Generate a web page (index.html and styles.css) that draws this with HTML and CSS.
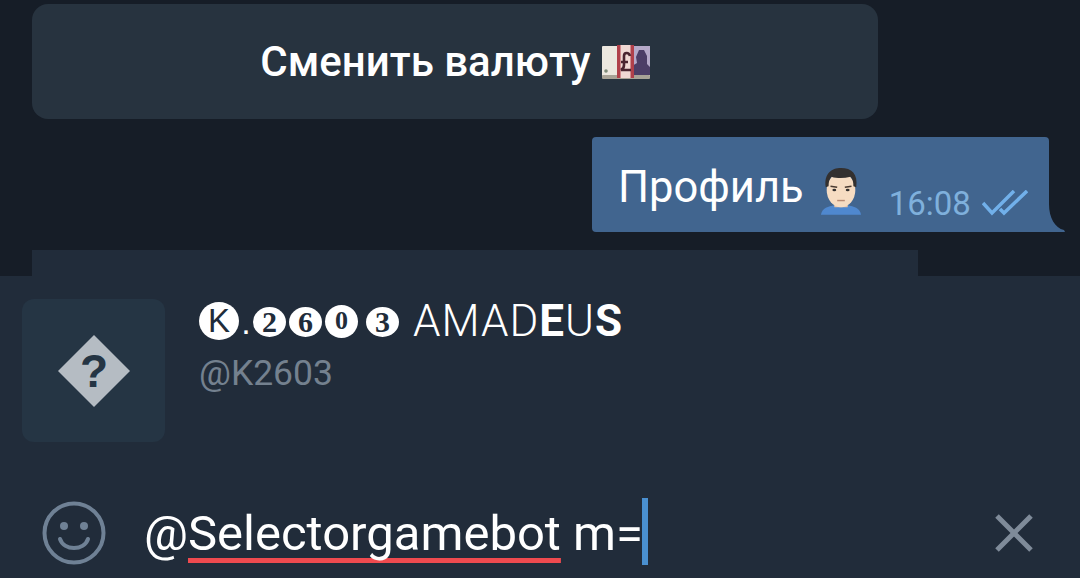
FILE: index.html
```html
<!DOCTYPE html>
<html lang="en">
<head>
    <meta charset="UTF-8">
    <meta name="viewport" content="width=device-width, initial-scale=1.0">
    <title>Selectorgamebot</title>
    <link rel="stylesheet" href="styles.css">
</head>
<body>
    <div class="chat">
        <div class="bot-button">
            <span>Сменить валюту</span>
            <svg class="emoji-money" viewBox="0 0 48 34">
                <rect x="0" y="1" width="48" height="31" rx="1" fill="#ece7df"/>
                <rect x="0" y="30" width="48" height="4" rx="1" fill="#a8a296"/>
                <rect x="30" y="1" width="18" height="29" fill="#b5a9c8"/>
                <path d="M30 30V21l5-3-1-6 3-7h5l3 6v8l3 3v8z" fill="#4c3e66"/>
                <rect x="15" y="0" width="17" height="33" fill="#f0d8d4"/>
                <rect x="15" y="0" width="3.5" height="33" fill="#b0404a"/>
                <rect x="28.5" y="0" width="3.5" height="33" fill="#b0404a"/>
                <path d="M28 11c-1-4-6-4-6 0v9c0 2-1 4-3 5h10M19 17h7" fill="none" stroke="#4a2430" stroke-width="2.600"/>
                <circle cx="4" cy="26" r="1.800" fill="#7d8a78"/>
            </svg>
        </div>
        <div class="bubble">
            <span class="bubble-text">Профиль</span>
            <svg class="emoji-man" viewBox="0 0 44 50">
                <path d="M1 50c1-7 8-9 14-10h14c6 1 13 3 14 10z" fill="#4f88cf"/>
                <rect x="15" y="32" width="14" height="10" fill="#e8c4a4"/>
                <ellipse cx="22" cy="24" rx="15" ry="18" fill="#f6dcc2"/>
                <path d="M6 21C4 7 12 1 22 1c11 0 18 6 16 20l-3-1c0-5-1-8-3-10-7 2-14 2-20 0-2 2-3 5-3 10z" fill="#33302f"/>
                <path d="M11 20l7 1M26 21l7-1" stroke="#4a3a30" stroke-width="1.600"/>
                <ellipse cx="15" cy="24" rx="2" ry="1.300" fill="#33302f"/>
                <ellipse cx="29" cy="24" rx="2" ry="1.300" fill="#33302f"/>
                <path d="M18 35h8" stroke="#b98a72" stroke-width="1.500"/>
            </svg>
            <span class="bubble-time">16:08</span>
            <svg class="read-ticks" viewBox="0 0 46 26">
                <path d="M1 13l9 10L32 1M18 19l4 4L45 1" fill="none" stroke="#71b0ea" stroke-width="3.500"/>
            </svg>
            <svg class="bubble-tail" viewBox="0 0 16 28">
                <path d="M0 0C0 14 6 24 15 26L16 28H0z" fill="#41658f"/>
            </svg>
        </div>
        <div class="next-message"></div>
    </div>

    <div class="panel">
        <div class="mention">
            <div class="avatar">
                <svg class="unknown-icon" viewBox="0 0 72 72" width="72" height="72">
                    <path d="M36 0l36 36-36 36L0 36z" fill="#b5bcc3"/>
                    <text x="36" y="52" class="unknown-mark">?</text>
                </svg>
            </div>
            <div class="mention-info">
                <div class="mention-name">
                    <span class="ring ring-big">K</span><span class="dot">.</span><span class="ring">2</span><span class="ring">6</span><span class="ring ring-mid">0</span><span class="ring">3</span>
                    <span class="fancy">AMAD<b>E</b>U<b>S</b></span>
                </div>
                <div class="mention-handle">@K2603</div>
            </div>
        </div>
        <div class="input-row">
            <svg class="smile" viewBox="0 0 64 64" width="64" height="64">
                <circle cx="32" cy="32" r="29.500" fill="none" stroke="#6f8195" stroke-width="4"/>
                <circle cx="22" cy="25" r="4" fill="#6f8195"/>
                <circle cx="42" cy="25" r="4" fill="#6f8195"/>
                <path d="M18 38c4 12 24 12 28 0" fill="none" stroke="#6f8195" stroke-width="4" stroke-linecap="round"/>
            </svg>
            <div class="input-text">@<span class="misspelt">Selectorgamebot</span> m=<span class="caret"></span></div>
            <svg class="close" viewBox="0 0 38 38" width="38" height="38">
                <path d="M2 2l34 34M36 2L2 36" stroke="#7f8b99" stroke-width="5"/>
            </svg>
        </div>
    </div>
</body>
</html>
```

FILE: styles.css
```css
* {
    box-sizing: border-box;
}
body {
    margin: 0;
    width: 1080px;
    height: 578px;
    overflow: hidden;
    font-family: Roboto, "Liberation Sans", sans-serif;
    background-color: #212c3a;
    color: #fff;
}
.chat {
    height: 276px;
    padding: 4px 16px 0 32px;
    background-color: #161d27;
    overflow: hidden;
}
.bot-button {
    width: 846px;
    height: 115px;
    display: flex;
    align-items: center;
    justify-content: center;
    gap: 11px;
    background-color: #27333f;
    border-radius: 16px;
    font-size: 42px;
    font-weight: 500;
}
.emoji-money {
    width: 48px;
    height: 34px;
}
.bubble {
    position: relative;
    width: 457px;
    height: 95px;
    margin: 18px 0 0 560px;
    padding: 0 0 0 26px;
    display: flex;
    align-items: flex-start;
    background-color: #41658f;
    border-radius: 4px 4px 0 4px;
}
.bubble-text {
    margin-top: 26px;
    font-size: 43.5px;
    line-height: 50px;
}
.emoji-man {
    width: 42px;
    height: 48px;
    margin: 30px 0 0 16px;
}
.bubble-time {
    margin: 47px 0 0 27px;
    font-size: 33px;
    line-height: 40px;
    color: #7fb0dc;
}
.read-ticks {
    width: 46px;
    height: 26px;
    margin: 53px 0 0 11px;
}
.bubble-tail {
    position: absolute;
    left: 457px;
    bottom: 0;
    width: 16px;
    height: 28px;
}
.next-message {
    width: 886px;
    height: 40px;
    margin-top: 18px;
    background-color: #212c3a;
}
.panel {
    height: 302px;
    display: flex;
    flex-direction: column;
}
.mention {
    height: 190px;
    padding: 23px 0 0 22px;
    display: flex;
    gap: 34px;
}
.avatar {
    width: 143px;
    height: 143px;
    display: flex;
    align-items: center;
    justify-content: center;
    background-color: #253544;
    border-radius: 12px;
}
.unknown-mark {
    font-family: "Liberation Sans", sans-serif;
    font-size: 46px;
    font-weight: 700;
    text-anchor: middle;
    fill: #253544;
}
.mention-name {
    margin-top: 3px;
    height: 38px;
    display: flex;
    align-items: center;
}
.ring {
    width: 33px;
    height: 30px;
    margin: 2px 3px 0 0;
    display: flex;
    align-items: center;
    justify-content: center;
    background-color: #fff;
    border-radius: 50%;
    color: #212c3a;
    font-family: "Liberation Serif", serif;
    font-size: 30px;
    font-weight: 700;
}
.ring-big {
    width: 40px;
    height: 38px;
    margin: 0;
    font-family: "Liberation Sans", sans-serif;
    font-weight: 400;
    font-size: 33px;
}
.ring-mid {
    height: 33px;
    margin: 0 8px 0 0;
    font-size: 26px;
}
.dot {
    width: 14px;
    margin-top: 2px;
    font-size: 34px;
    text-align: center;
    font-family: "Liberation Sans", sans-serif;
}
.fancy {
    margin-left: 11px;
    font-size: 44px;
    font-weight: 300;
    letter-spacing: 1px;
}
.fancy b {
    font-weight: 700;
}
.mention-handle {
    margin-top: 13px;
    font-size: 35.5px;
    line-height: 40px;
    color: #74818f;
}
.input-row {
    height: 112px;
    padding: 22px 47px 0 42px;
    display: flex;
    align-items: center;
}
.smile {
    flex: none;
}
.input-text {
    flex: 1;
    margin-left: 38px;
    display: flex;
    align-items: center;
    font-size: 49px;
    white-space: pre;
}
.misspelt {
    text-decoration: underline #ee4a4f 5px;
    text-decoration-skip-ink: none;
    text-underline-offset: 8px;
}
.caret {
    width: 6px;
    height: 67px;
    margin: -4px 0 0 -1px;
    background-color: #4a90d0;
}
```
